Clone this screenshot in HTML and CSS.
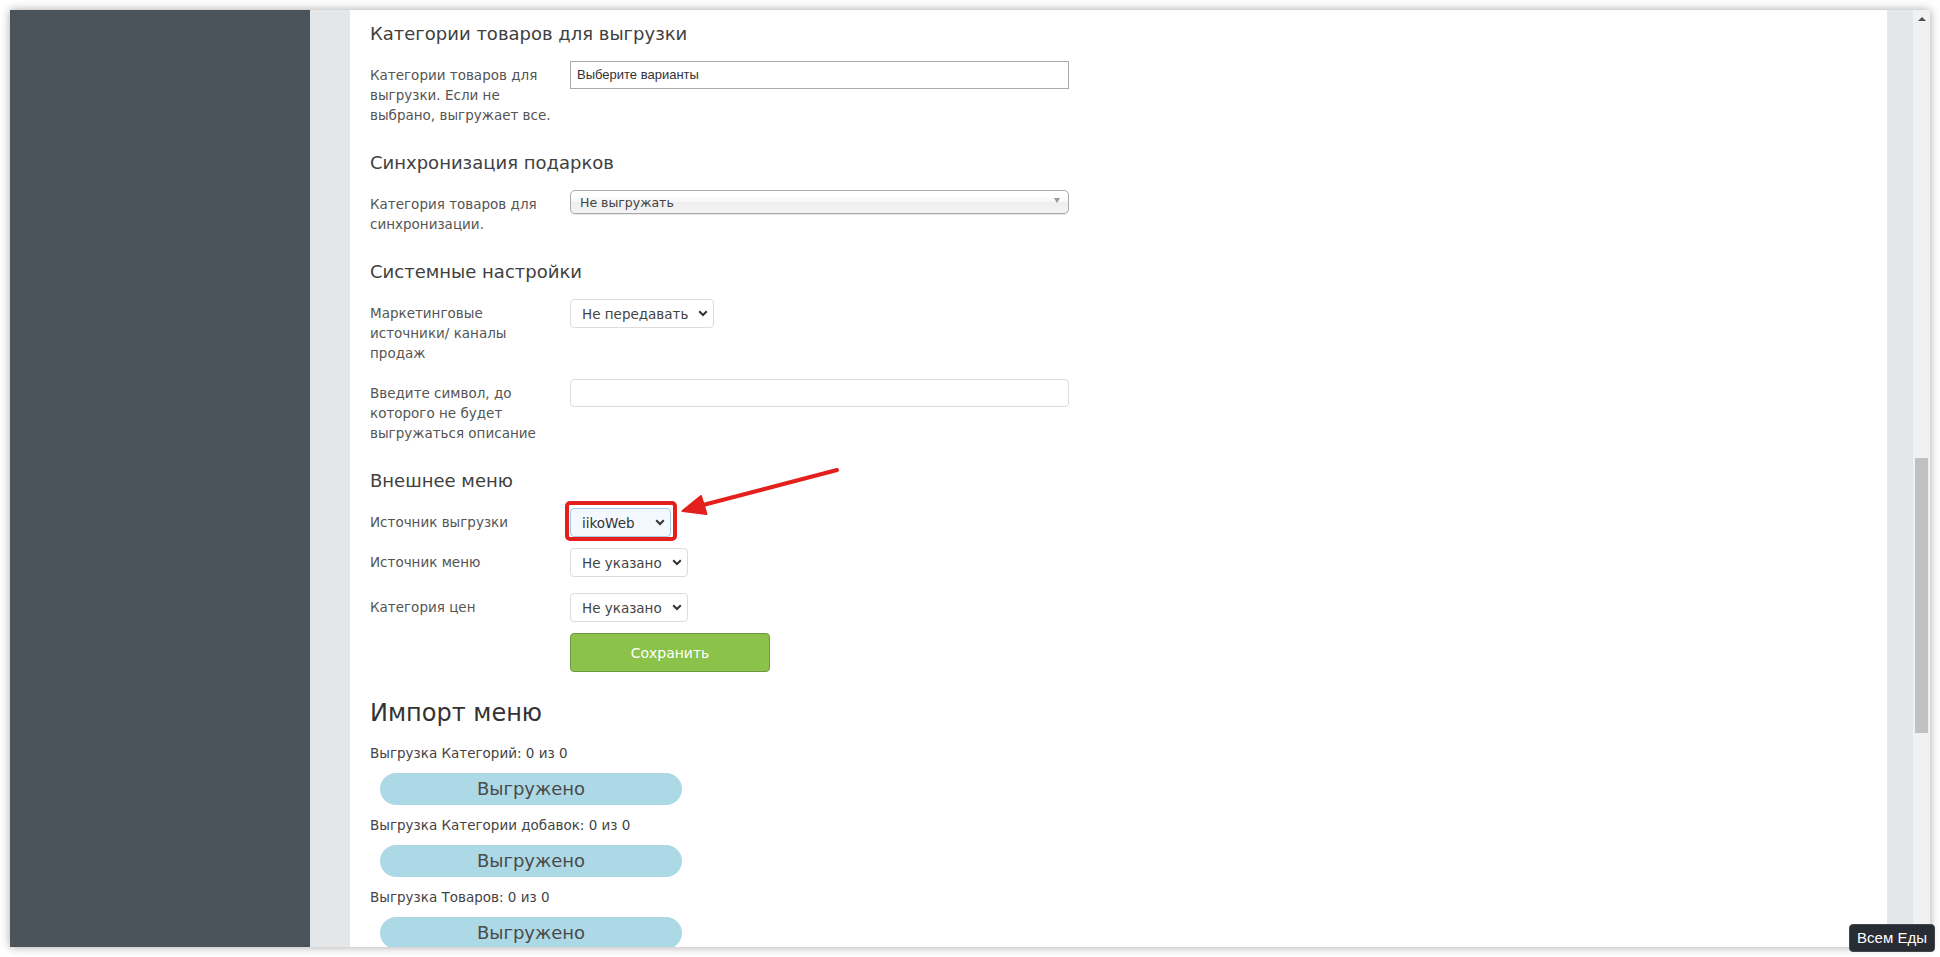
FILE: index.html
```html
<!DOCTYPE html>
<html lang="ru">
<head>
    <meta charset="UTF-8">
    <meta name="viewport" content="width=device-width, initial-scale=1.0">
    <title>Настройки интеграции</title>
    <link rel="stylesheet" href="styles.css">
</head>
<body>
    <div class="window">
        <aside class="sidebar"></aside>
        <div class="gutter"></div>

        <main class="content">
            <div class="section">
                <h3 class="section-title">Категории товаров для выгрузки</h3>
                <div class="form-row">
                    <label class="form-label">Категории товаров для выгрузки. Если не выбрано, выгружает все.</label>
                    <div class="chosen-multi">Выберите варианты</div>
                </div>
            </div>

            <div class="section">
                <h3 class="section-title">Синхронизация подарков</h3>
                <div class="form-row">
                    <label class="form-label">Категория товаров для синхронизации.</label>
                    <div class="chosen-single">
                        <span>Не выгружать</span>
                        <i class="chosen-arrow"></i>
                    </div>
                </div>
            </div>

            <div class="section">
                <h3 class="section-title">Системные настройки</h3>
                <div class="form-row">
                    <label class="form-label">Маркетинговые источники/ каналы продаж</label>
                    <div class="select">
                        <span>Не передавать</span>
                        <svg class="chevron" width="10" height="7" viewBox="0 0 10 7"><path d="M1.2 1.3L5 5l3.8-3.7" fill="none" stroke="#333" stroke-width="2"/></svg>
                    </div>
                </div>
                <div class="form-row">
                    <label class="form-label">Введите символ, до которого не будет выгружаться описание</label>
                    <div class="text-input"></div>
                </div>
            </div>

            <div class="section">
                <h3 class="section-title">Внешнее меню</h3>
                <div class="form-row form-row--tight">
                    <label class="form-label">Источник выгрузки</label>
                    <div class="highlight-wrap">
                        <div class="select select--focus">
                            <span>iikoWeb</span>
                            <svg class="chevron" width="10" height="7" viewBox="0 0 10 7"><path d="M1.2 1.3L5 5l3.8-3.7" fill="none" stroke="#333" stroke-width="2"/></svg>
                        </div>
                        <!-- красная рамка и стрелка поверх -->
                        <div class="highlight-box"></div>
                        <svg class="pointer-arrow" width="170" height="60" viewBox="0 0 170 60">
                            <path d="M157 7L23 42" fill="none" stroke="#e3201b" stroke-width="4" stroke-linecap="round"/>
                            <path d="M2.5 48L21 33L26.5 51Z" fill="#e3201b" stroke="#e3201b" stroke-width="2" stroke-linejoin="round"/>
                        </svg>
                    </div>
                </div>
                <div class="form-row">
                    <label class="form-label">Источник меню</label>
                    <div class="select">
                        <span>Не указано</span>
                        <svg class="chevron" width="10" height="7" viewBox="0 0 10 7"><path d="M1.2 1.3L5 5l3.8-3.7" fill="none" stroke="#333" stroke-width="2"/></svg>
                    </div>
                </div>
                <div class="form-row form-row--tight">
                    <label class="form-label">Категория цен</label>
                    <div class="select">
                        <span>Не указано</span>
                        <svg class="chevron" width="10" height="7" viewBox="0 0 10 7"><path d="M1.2 1.3L5 5l3.8-3.7" fill="none" stroke="#333" stroke-width="2"/></svg>
                    </div>
                </div>
                <div class="form-row form-row--actions">
                    <div class="form-label"></div>
                    <button class="btn-save">Сохранить</button>
                </div>
            </div>

            <div class="import">
                <h2 class="import-title">Импорт меню</h2>
                <div class="import-item">
                    <div class="import-label">Выгрузка Категорий: 0 из 0</div>
                    <div class="import-status">Выгружено</div>
                </div>
                <div class="import-item">
                    <div class="import-label">Выгрузка Категории добавок: 0 из 0</div>
                    <div class="import-status">Выгружено</div>
                </div>
                <div class="import-item">
                    <div class="import-label">Выгрузка Товаров: 0 из 0</div>
                    <div class="import-status">Выгружено</div>
                </div>
            </div>
        </main>

        <div class="gutter"></div>
        <div class="scrollbar">
            <div class="scroll-up"></div>
            <div class="scroll-thumb"></div>
        </div>
    </div>

    <div class="site-tooltip">Всем Еды</div>
</body>
</html>
```

FILE: styles.css
```css
* {
    box-sizing: border-box;
    margin: 0;
    padding: 0;
}

body {
    background-color: #fff;
    font-family: "DejaVu Sans", "Noto Sans", sans-serif;
    color: #4a4a4a;
    overflow: hidden;
    height: 957px;
}

.window {
    margin: 10px;
    height: 937px;
    display: grid;
    grid-template-columns: 300px 40px 1fr 26px 17px;
    box-shadow: 0 0 9px rgba(0, 0, 0, 0.35);
    overflow: hidden;
}

.sidebar {
    background-color: #4b535b;
}

.gutter {
    background-color: #e3e7ea;
}

.content {
    background-color: #fff;
    padding: 13px 20px 0;
    overflow: hidden;
}

.section {
    display: flow-root;
}

.section + .section {
    padding-top: 11px;
}

.section-title {
    font-size: 18px;
    line-height: 22px;
    font-weight: normal;
    color: #404040;
    margin-bottom: 16px;
}

.form-row {
    display: flex;
    align-items: flex-start;
    margin-bottom: 16px;
}

.form-row--tight {
    margin-bottom: 11px;
}

.form-label {
    width: 200px;
    flex-shrink: 0;
    padding: 4px 15px 0 0;
    font-size: 13.5px;
    line-height: 20px;
    color: #555;
}

/* поля */
.chosen-multi {
    width: 499px;
    height: 28px;
    border: 1px solid #aaa;
    background: #fff;
    padding: 0 6px;
    font-family: "Liberation Sans", Arial, sans-serif;
    font-size: 13px;
    line-height: 26px;
    color: #333;
}

.chosen-single {
    width: 499px;
    height: 24px;
    border: 1px solid #aaa;
    border-radius: 5px;
    background: linear-gradient(#fff 20%, #f6f6f6 50%, #eee 52%, #f4f4f4 100%);
    box-shadow: 0 1px 1px rgba(0, 0, 0, 0.1);
    display: flex;
    align-items: center;
    justify-content: space-between;
    padding: 0 8px 0 9px;
    font-size: 12.5px;
    color: #444;
}

.chosen-arrow {
    width: 0;
    height: 0;
    border-left: 3.5px solid transparent;
    border-right: 3.5px solid transparent;
    border-top: 5px solid #999;
    margin-top: -4px;
}

.select {
    display: inline-flex;
    align-items: center;
    height: 29px;
    padding: 0 5px 0 11px;
    border: 1px solid #dcdcdc;
    border-radius: 4px;
    background: #fff;
    font-size: 13.5px;
    color: #444;
    white-space: nowrap;
}

.select span {
    margin-right: 10px;
}

.select--focus {
    background: #f3f9fe;
    border-color: #a9c8e2;
    color: #333;
}

.select--focus span {
    margin-right: 20px;
}

.chevron {
    display: block;
}

.text-input {
    width: 499px;
    height: 28px;
    border: 1px solid #dcdcdc;
    border-radius: 4px;
    background: #fff;
}

.highlight-wrap {
    position: relative;
}

.highlight-box {
    position: absolute;
    top: -7px;
    left: -5px;
    right: -6px;
    bottom: -4px;
    border: 4px solid #e3201b;
    border-radius: 5px;
}

.pointer-arrow {
    position: absolute;
    left: 110px;
    top: -45px;
    overflow: visible;
}

.btn-save {
    width: 200px;
    height: 39px;
    border: 1px solid #6f9641;
    border-radius: 4px;
    background-color: #8bc34a;
    color: #fff;
    font-family: inherit;
    font-size: 14px;
}

.form-row--actions {
    margin-bottom: 26px;
}

/* импорт */
.import-title {
    font-size: 24px;
    line-height: 30px;
    font-weight: normal;
    color: #333;
    margin-bottom: 15px;
}

.import-item {
    margin-bottom: 10px;
}

.import-label {
    font-size: 13.5px;
    line-height: 20px;
    color: #444;
    margin-bottom: 10px;
}

.import-status {
    width: 302px;
    height: 32px;
    margin-left: 10px;
    border-radius: 16px;
    background-color: #add8e6;
    text-align: center;
    font-size: 18px;
    line-height: 32px;
    color: #4a4a4a;
}

/* скроллбар */
.scrollbar {
    background-color: #f1f1f1;
    position: relative;
}

.scroll-up {
    width: 0;
    height: 0;
    margin: 7px auto 0;
    border-left: 4px solid transparent;
    border-right: 4px solid transparent;
    border-bottom: 4px solid #505050;
}

.scroll-thumb {
    width: 13px;
    height: 275px;
    margin: 437px auto 0 2px;
    background-color: #c1c1c1;
}

.site-tooltip {
    position: fixed;
    right: 5px;
    bottom: 5px;
    width: 86px;
    height: 28px;
    border: 1px solid #444;
    border-radius: 4px;
    background-color: #282c34;
    color: #fff;
    font-family: "Liberation Sans", Arial, sans-serif;
    font-size: 15px;
    line-height: 26px;
    text-align: center;
}
```
